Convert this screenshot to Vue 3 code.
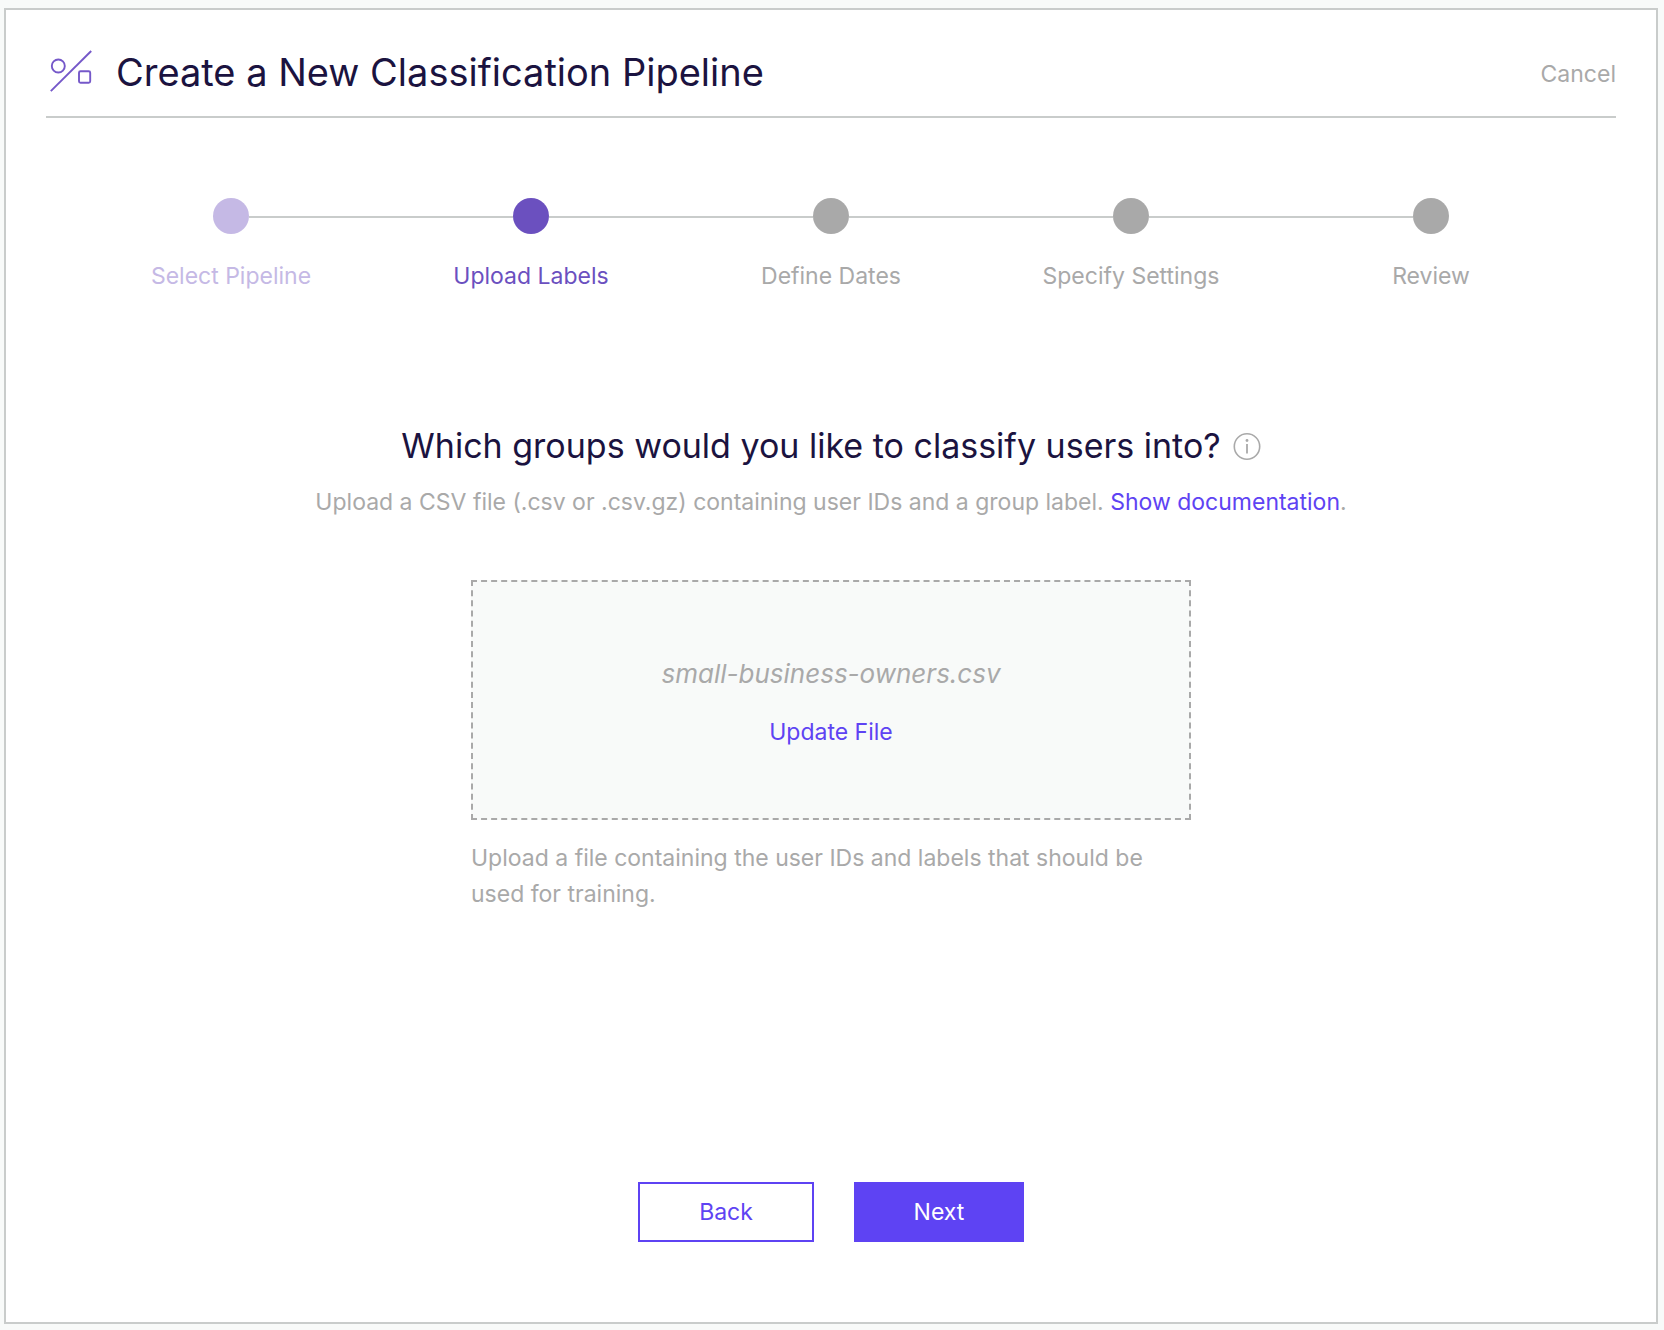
<script setup>
import { ref } from 'vue'

const steps = ['Select Pipeline', 'Upload Labels', 'Define Dates', 'Specify Settings', 'Review']
const current = ref(1)
const fileName = ref('small-business-owners.csv')

function stateOf(index) {
  if (index < current.value) return 'done'
  return index === current.value ? 'active' : 'upcoming'
}
</script>

<template>
  <div class="page">
    <main class="card">
      <header class="header">
        <svg class="logo" viewBox="0 0 42 44" fill="none" aria-hidden="true">
          <path d="M.8 41.2 41.2 1" />
          <circle cx="8.3" cy="16" r="6.5" />
          <rect x="29" y="21.3" width="11.2" height="11.4" rx="1.5" />
        </svg>
        <h1 class="title">Create a New Classification Pipeline</h1>
        <button type="button" class="text-button cancel">Cancel</button>
      </header>

      <ol class="steps">
        <li v-for="(step, index) in steps" :key="step" class="step" :class="stateOf(index)">
          <div class="rail">
            <span class="line"></span>
            <span class="dot"></span>
            <span class="line"></span>
          </div>
          <span class="step-label">{{ step }}</span>
        </li>
      </ol>

      <section class="question">
        <div class="question-row">
          <h2 class="question-title">Which groups would you like to classify users into?</h2>
          <button type="button" class="info" aria-label="More information">
            <svg viewBox="0 0 28 28" fill="none" aria-hidden="true">
              <circle cx="14" cy="14.5" r="12.7" stroke="currentColor" stroke-width="1.6" />
              <path d="M14 12v9.5" stroke="currentColor" stroke-width="1.8" />
              <circle cx="14" cy="8.5" r="1.4" fill="currentColor" />
            </svg>
          </button>
        </div>
        <p class="hint">
          Upload a CSV file (.csv or .csv.gz) containing user IDs and a group label.
          <a href="#documentation">Show documentation</a>.
        </p>
      </section>

      <section class="upload">
        <div class="dropzone">
          <em class="file-name">{{ fileName }}</em>
          <button type="button" class="text-button update">Update File</button>
        </div>
        <p class="help">Upload a file containing the user IDs and labels that should be used for training.</p>
      </section>

      <footer class="actions">
        <button type="button" class="action back">Back</button>
        <button type="button" class="action next">Next</button>
      </footer>
    </main>
  </div>
</template>

<style>
body {
  margin: 0;
  background: #f8faf9;
}
</style>

<style scoped>
.page {
  display: flex;
  box-sizing: border-box;
  min-height: 100vh;
  padding: 8px 6px 6px 4px;
  background: #f8faf9;
  color: #a9a9a9;
  font-family: Inter, "Liberation Sans", sans-serif;
  font-size: 23px;
  line-height: 36px;
}

.card {
  display: flex;
  flex: 1;
  flex-direction: column;
  min-width: 0;
  padding: 40px 40px 80px;
  border: 2px solid #c9cccb;
  background: #fff;
}

h1,
h2,
p,
ol {
  margin: 0;
  padding: 0;
  font-weight: 400;
}

button {
  padding: 0;
  border: 0;
  background: none;
  font: inherit;
  cursor: pointer;
}

.header {
  display: flex;
  align-items: center;
  padding: 0 0 22px 4px;
  border-bottom: 2px solid #c9cccb;
}

.logo {
  width: 42px;
  height: 44px;
  margin-right: 24px;
  stroke: #7558c9;
  stroke-width: 1.9;
}

.title {
  flex: 1;
  color: #1b1340;
  font-size: 38px;
  line-height: 44px;
}

.text-button {
  line-height: 36px;
}

.cancel {
  align-self: flex-end;
  color: #a9a9a9;
  line-height: 40px;
}

.steps {
  display: grid;
  grid-template-columns: repeat(5, 1fr);
  width: 100%;
  max-width: 1500px;
  margin: 80px auto 0;
  list-style: none;
}

.step {
  display: flex;
  flex-direction: column;
  gap: 24px;
  text-align: center;
}

.rail {
  display: flex;
}

.line {
  flex: 1;
  box-sizing: border-box;
  align-self: flex-end;
  height: 18px;
  border-top: 2px solid #c9cccb;
}

.step:first-child .line:first-child,
.step:last-child .line:last-child {
  border-color: transparent;
}

.dot {
  width: 36px;
  height: 36px;
  border-radius: 50%;
  background: currentColor;
}

.done {
  color: #c5b9e5;
}

.active {
  color: #6b50bf;
}

.question {
  margin-top: 130px;
  text-align: center;
}

.question-row {
  display: flex;
  align-items: center;
  justify-content: center;
  gap: 12px;
}

.question-title {
  color: #1b1340;
  font-size: 34px;
  line-height: 44px;
}

.info {
  width: 28px;
  height: 28px;
  color: #a9a9a9;
}

.info svg {
  display: block;
}

.hint {
  margin-top: 16px;
}

.hint a,
.update {
  color: #5e43f3;
  text-decoration: none;
}

.upload {
  width: 100%;
  max-width: 720px;
  margin: 60px auto 0;
}

.dropzone {
  display: flex;
  box-sizing: border-box;
  flex-direction: column;
  align-items: center;
  justify-content: center;
  gap: 20px;
  min-height: 240px;
  padding-top: 4px;
  border: 2px dashed #a9a9a9;
  background: #f8faf9;
}

.file-name {
  font-size: 26px;
  line-height: 40px;
}

.help {
  margin-top: 20px;
}

.actions {
  display: flex;
  justify-content: center;
  gap: 40px;
  margin-top: auto;
  padding-top: 60px;
}

.action {
  box-sizing: border-box;
  height: 60px;
  border: 2px solid #5e43f3;
}

.back {
  width: 176px;
  color: #5e43f3;
}

.next {
  width: 170px;
  background: #5e43f3;
  color: #fff;
}
</style>
